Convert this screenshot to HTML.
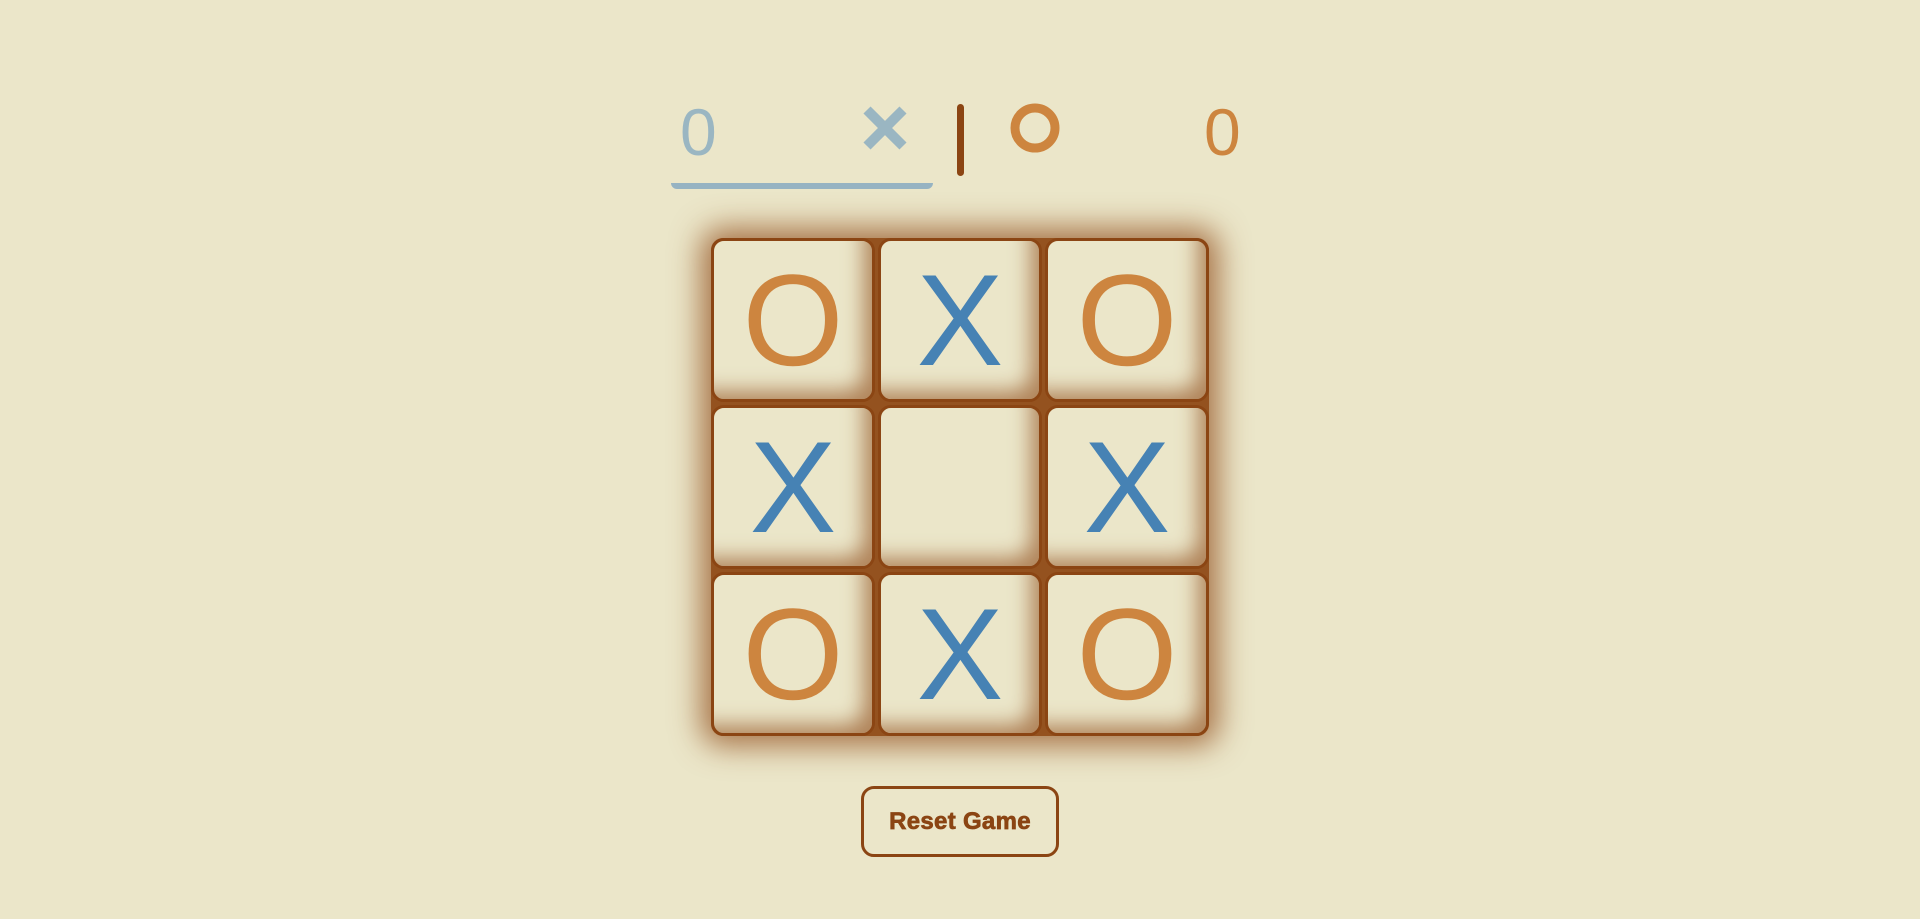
<!DOCTYPE html>
<html><head><meta charset="utf-8"><style>
html,body{margin:0;padding:0;width:1920px;height:919px;background:#ebe6c9;overflow:hidden;font-family:"Liberation Sans",Arial,sans-serif}
.a{position:absolute}
.num{font-size:66px;line-height:1;font-weight:300}
.board{left:711px;top:238px;width:498px;height:498px;box-shadow:0 0 30px 10px rgba(139,69,19,.7);border-radius:12px;background:#94521f}
.cell{position:absolute;width:158px;height:158px;border:3px solid #8b4513;border-radius:13px;background:#ebe6c9;box-shadow:inset -18px -18px 20px -10px rgba(139,69,19,.6);text-align:center;font-size:130px;line-height:158px}
.X{color:#4682b4}.O{color:#cd853f}
.btn{left:861px;top:786px;width:192px;height:65px;border:3px solid #8b4513;border-radius:13px;color:#8b4513;font-weight:bold;font-size:24px;letter-spacing:.3px;text-align:center;line-height:65px;-webkit-text-stroke:.7px #8b4513}
</style></head><body>
<div class="a num" style="left:680px;top:99px;color:#9ab6c2">0</div>
<svg class="a" style="left:862px;top:105px" width="46" height="46"><path d="M5 5L41 41M41 5L5 41" stroke="#9ab6c2" stroke-width="10"/></svg>
<div class="a" style="left:957px;top:104px;width:7px;height:72px;background:#8b4513;border-radius:4px"></div>
<svg class="a" style="left:1008px;top:101px" width="54" height="54"><circle cx="27" cy="27" r="20" fill="none" stroke="#cd853f" stroke-width="9"/></svg>
<div class="a num" style="left:1204px;top:99px;color:#cd853f">0</div>
<div class="a" style="left:671px;top:183px;width:262px;height:6px;background:#96b3c2;border-radius:0 0 6px 6px"></div>
<div class="a board">
<div class="cell O" style="left:0;top:0">O</div>
<div class="cell X" style="left:167px;top:0">X</div>
<div class="cell O" style="left:334px;top:0">O</div>
<div class="cell X" style="left:0;top:167px">X</div>
<div class="cell" style="left:167px;top:167px"></div>
<div class="cell X" style="left:334px;top:167px">X</div>
<div class="cell O" style="left:0;top:334px">O</div>
<div class="cell X" style="left:167px;top:334px">X</div>
<div class="cell O" style="left:334px;top:334px">O</div>
</div>
<div class="a btn">Reset Game</div>
</body></html>
